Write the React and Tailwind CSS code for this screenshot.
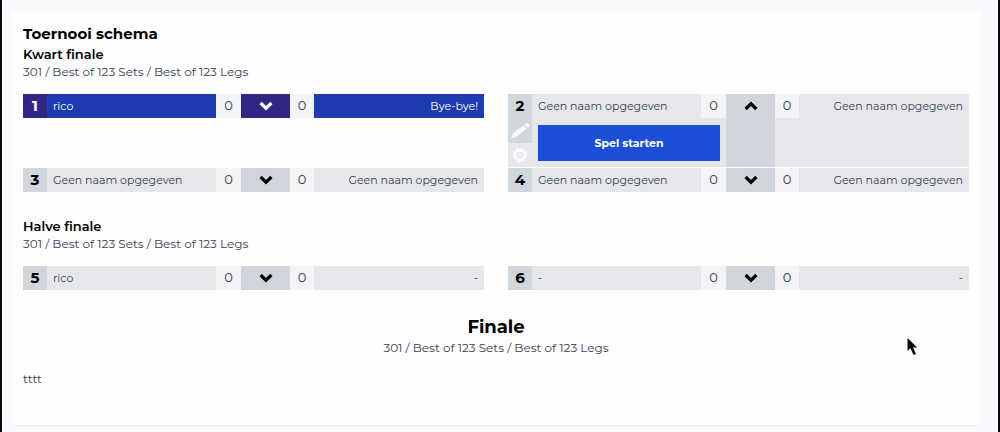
import React, { useState } from 'react';

function Chevron({ up }) {
  return (
    <svg viewBox="0 0 14 10" className="h-[10px] w-[14px]" fill="none" stroke="currentColor" strokeWidth="3.2" aria-hidden="true">
      <path d={up ? 'M1.6 8 L7 2.8 L12.4 8' : 'M1.6 2 L7 7.2 L12.4 2'} />
    </svg>
  );
}

function Pencil() {
  return (
    <svg viewBox="0 0 20 18" className="h-[18px] w-5" fill="currentColor" aria-hidden="true">
      <path d="M1 16.5 L3 11.6 L13.6 3.2 L16.6 6.8 L6 15 Z" />
      <path d="M14.5 2.5 L16 1.3 Q17.4 0.6 18.5 1.9 Q19.7 3.4 18.9 4.8 L17.4 6 Z" />
    </svg>
  );
}

function Gear() {
  return (
    <svg viewBox="0 0 16 16" className="size-4" fill="none" stroke="currentColor" aria-hidden="true">
      <circle cx="8" cy="8" r="4.7" strokeWidth="2.6" />
      <circle cx="8" cy="8" r="6.4" strokeWidth="2" strokeDasharray="2.9 2.13" />
      <circle cx="8" cy="8" r="1.2" strokeWidth="0.8" />
    </svg>
  );
}

function Score({ value }) {
  return <span className="flex h-6 items-center justify-center bg-gray-100 text-[13px] text-gray-700">{value}</span>;
}

function Match({ number, home, away, winner, defaultOpen = false }) {
  const [open, setOpen] = useState(defaultOpen);
  const dark = winner ? 'bg-[#312783] text-white' : 'bg-gray-300 text-black';
  const name = winner ? 'bg-[#1e3caf] text-white' : 'text-gray-700';
  return (
    <article className="grid grid-cols-[24px_minmax(0,1fr)_49px_minmax(0,1fr)] self-start bg-gray-200">
      <div className={`flex flex-col ${dark}`}>
        <span className="flex h-6 items-center justify-center text-[15px] font-bold">{number}</span>
        {open && (
          <>
            <button type="button" aria-label="Bewerken" className="flex h-[25px] items-center justify-center text-gray-50"><Pencil /></button>
            <button type="button" aria-label="Instellingen" className="flex h-6 items-center justify-center bg-gray-200 text-gray-50"><Gear /></button>
          </>
        )}
      </div>
      <div>
        <div className="grid grid-cols-[minmax(0,1fr)_25px]">
          <span className={`flex h-6 items-center truncate px-1.5 text-[11px] ${name}`}>{home}</span>
          <Score value={0} />
        </div>
        {open && (
          <div className="px-1.5 pt-[7px] pb-1.5">
            <button type="button" className="h-9 w-full bg-[#1d4ed8] text-[11px] font-bold text-white">Spel starten</button>
          </div>
        )}
      </div>
      <button type="button" aria-label="Details" aria-expanded={open} onClick={() => setOpen(!open)} className={`flex items-start justify-center pt-[7px] ${dark}`}>
        <Chevron up={open} />
      </button>
      <div className="grid grid-cols-[24px_minmax(0,1fr)] items-start">
        <Score value={0} />
        <span className={`flex h-6 items-center justify-end truncate px-1.5 text-[11px] ${name}`}>{away}</span>
      </div>
    </article>
  );
}

const format = '301 / Best of 123 Sets / Best of 123 Legs';
const unnamed = 'Geen naam opgegeven';

function Round({ title, children }) {
  return (
    <section>
      <h2 className="text-[13px] leading-5 font-semibold text-black">{title}</h2>
      <p className="text-[12px] leading-4">{format}</p>
      <div className="mt-3.5 grid grid-cols-2 gap-x-6 gap-y-px">{children}</div>
    </section>
  );
}

export default function App() {
  return (
    <div className="min-h-screen border-x-2 border-[#09070f] bg-[#f9f9fe] pt-3 pr-[17px] pb-[7px] pl-[9px] font-['Montserrat','Inter','Noto_Sans',sans-serif] text-[12px] font-normal text-gray-700">
      <main className="relative rounded-xs bg-[#fefefe] px-3 pt-3 pb-[37px] shadow-xs">
        <h1 className="text-[15px] leading-5 font-bold text-black">Toernooi schema</h1>
        <Round title="Kwart finale">
          <Match number={1} home="rico" away="Bye-bye!" winner />
          <Match number={2} home={unnamed} away={unnamed} defaultOpen />
          <Match number={3} home={unnamed} away={unnamed} />
          <Match number={4} home={unnamed} away={unnamed} />
        </Round>
        <div className="mt-6">
          <Round title="Halve finale">
            <Match number={5} home="rico" away="-" />
            <Match number={6} home="-" away="-" />
          </Round>
        </div>
        <section className="mt-6 text-center">
          <h2 className="text-[18px] leading-[26px] font-bold text-black">Finale</h2>
          <p className="text-[12px] leading-4">{format}</p>
        </section>
        <p className="mt-3.5 text-[12px] leading-[18px]">tttt</p>
        <svg viewBox="0 0 11 19" className="absolute right-[63px] bottom-[69px] h-[19px] w-[11px]" aria-hidden="true">
          <path d="M0.5 1 V14 L3.4 11.3 L6.6 18 L9 17 L6 10.4 H10.3 Z" fill="#0a0a0a" />
        </svg>
      </main>
    </div>
  );
}
